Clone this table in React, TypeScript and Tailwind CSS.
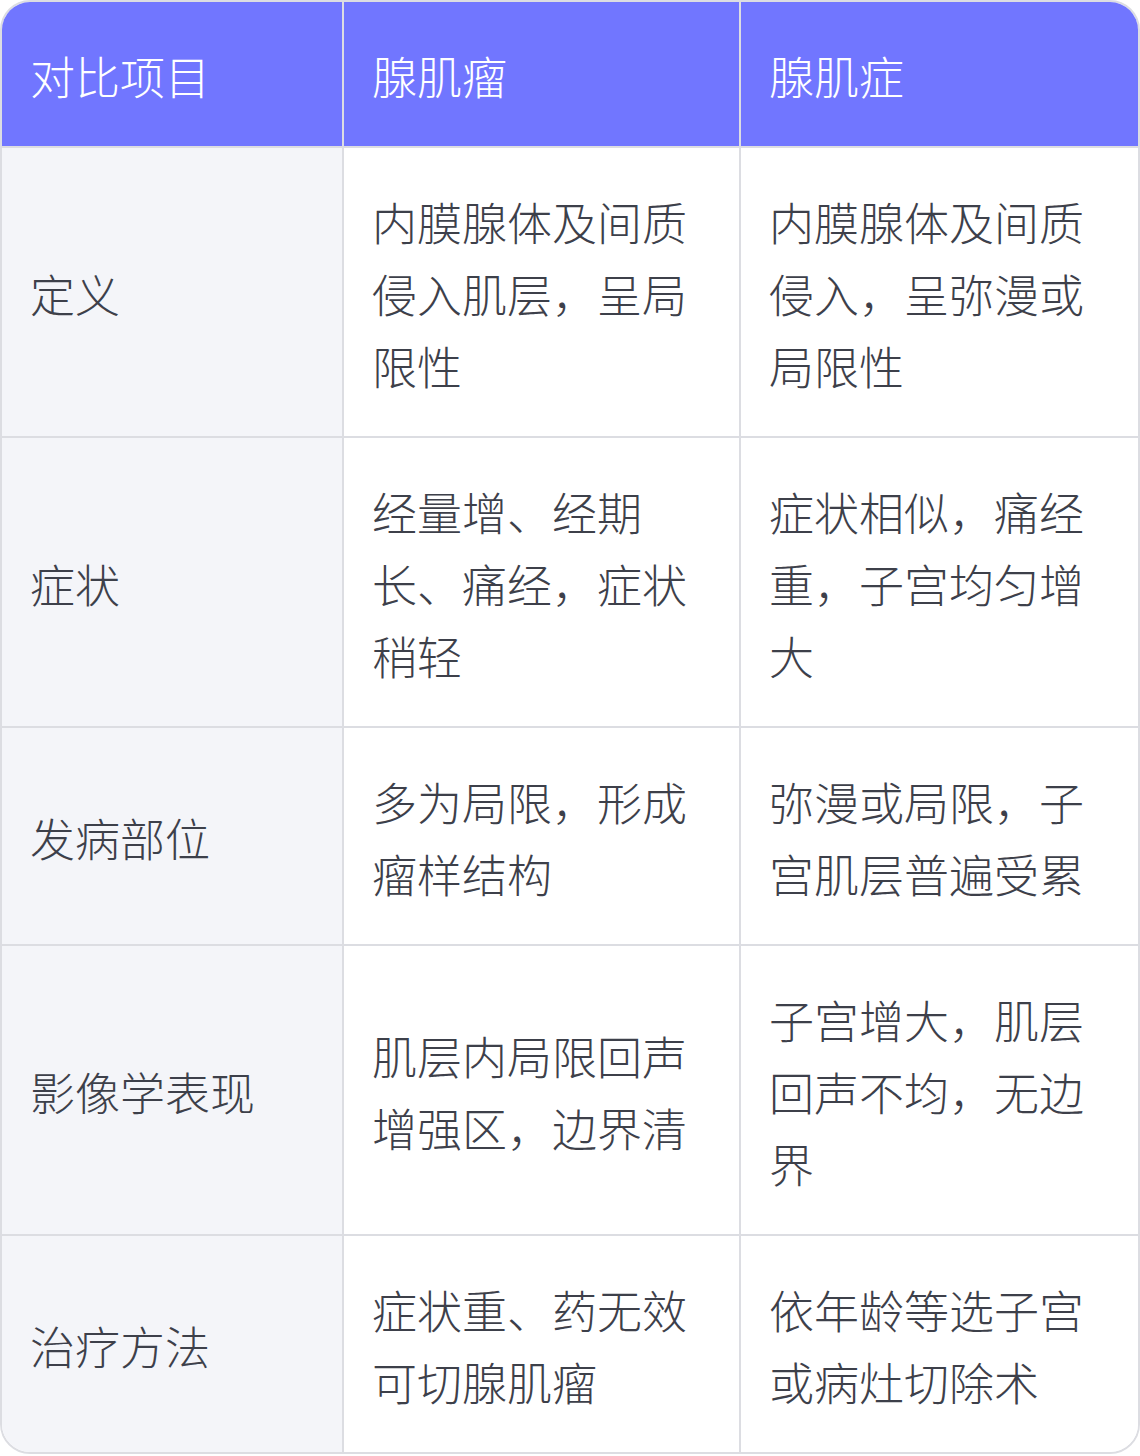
const rows: { label: string; a: string; b: string }[] = [
  {
    label: "定义",
    a: "内膜腺体及间质侵入肌层，呈局限性",
    b: "内膜腺体及间质侵入，呈弥漫或局限性",
  },
  {
    label: "症状",
    a: "经量增、经期长、痛经，症状稍轻",
    b: "症状相似，痛经重，子宫均匀增大",
  },
  {
    label: "发病部位",
    a: "多为局限，形成瘤样结构",
    b: "弥漫或局限，子宫肌层普遍受累",
  },
  {
    label: "影像学表现",
    a: "肌层内局限回声增强区，边界清",
    b: "子宫增大，肌层回声不均，无边界",
  },
  {
    label: "治疗方法",
    a: "症状重、药无效可切腺肌瘤",
    b: "依年龄等选子宫或病灶切除术",
  },
];

export default function App() {
  return (
    <div className="w-[1140px] bg-white font-['Noto_Sans_CJK_SC','Noto_Sans',sans-serif]">
      <div className="w-[1140px] overflow-hidden rounded-[30px] border-2 border-[#dcdde2]">
        <table className="w-full table-fixed border-collapse text-[45px] font-light leading-[72px]">
          <colgroup>
            <col className="w-[341px]" />
            <col className="w-[397px]" />
            <col />
          </colgroup>
          <thead>
            <tr className="bg-[#7176ff] text-white">
              <th className="px-[28px] pt-[38px] pb-[34px] text-left font-light">对比项目</th>
              <th className="border-l-2 border-[#dcdde2] px-[28px] pt-[38px] pb-[34px] text-left font-light">
                腺肌瘤
              </th>
              <th className="border-l-2 border-[#dcdde2] px-[28px] pt-[38px] pb-[34px] text-left font-light">
                腺肌症
              </th>
            </tr>
          </thead>
          <tbody className="text-[#3d404a]">
            {rows.map((row) => (
              <tr key={row.label} className="border-t-2 border-[#dcdde2]">
                <td className="bg-[#f4f5f9] px-[28px] pt-[38px] pb-[34px] align-middle">{row.label}</td>
                <td className="border-l-2 border-[#dcdde2] bg-white px-[28px] pt-[38px] pb-[34px] align-middle">
                  {row.a}
                </td>
                <td className="border-l-2 border-[#dcdde2] bg-white px-[28px] pt-[38px] pb-[34px] align-middle">
                  {row.b}
                </td>
              </tr>
            ))}
          </tbody>
        </table>
      </div>
    </div>
  );
}
